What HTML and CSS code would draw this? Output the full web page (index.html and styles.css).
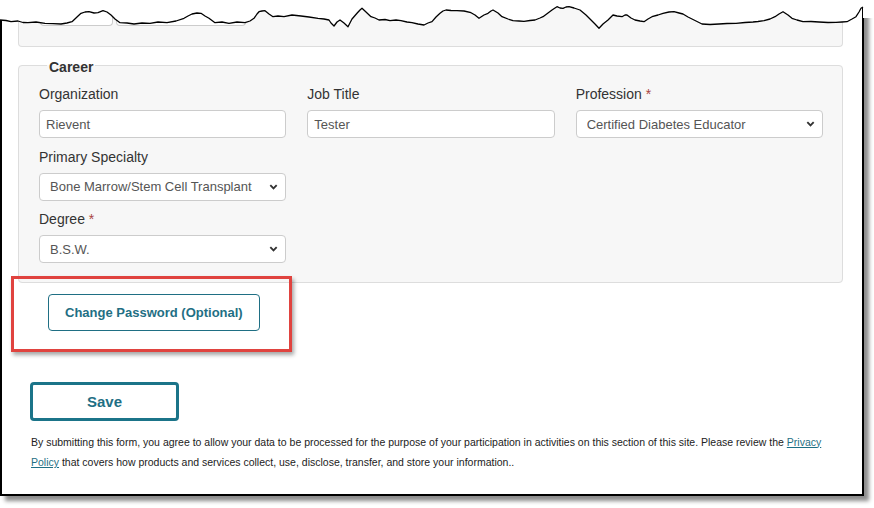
FILE: index.html
```html
<!DOCTYPE html>
<html>
<head>
<meta charset="utf-8">
<link rel="stylesheet" href="styles.css">
</head>
<body>
<div class="frame">
  <div class="prev">
    <div class="prev-input prev-a"></div>
    <div class="prev-input prev-b"></div>
  </div>

  <fieldset class="career">
    <legend>Career</legend>
    <div class="grid">
      <div class="group">
        <label>Organization</label>
        <input class="control" type="text" value="Rievent">
      </div>
      <div class="group">
        <label>Job Title</label>
        <input class="control" type="text" value="Tester">
      </div>
      <div class="group">
        <label>Profession <span class="req">*</span></label>
        <select class="control select"><option>Certified Diabetes Educator</option></select>
      </div>
      <div class="group">
        <label>Primary Specialty</label>
        <select class="control select"><option>Bone Marrow/Stem Cell Transplant</option></select>
      </div>
      <div class="group row-start">
        <label>Degree <span class="req">*</span></label>
        <select class="control select"><option>B.S.W.</option></select>
      </div>
    </div>
  </fieldset>

  <div class="pw-row">
    <button class="btn-outline">Change Password (Optional)</button>
  </div>

  <div class="save-row">
    <button class="btn-save">Save</button>
  </div>

  <p class="disclaimer">By submitting this form, you agree to allow your data to be processed for the purpose of your participation in activities on this section of this site. Please review the <a href="#">Privacy</a> <a href="#">Policy</a> that covers how products and services collect, use, disclose, transfer, and store your information..</p>

  <div class="highlight"></div>

  <svg class="torn" width="874" height="40" viewBox="0 0 874 40">
    <polygon fill="#fff" points="0,0 0,20 6,20.5 11,21.7 18,21 23,22.5 28,22.7 36,22 45,23.3 53,23.6 61,24 67,23 72,21.7 77,17 81,13.3 85,12 89,11.7 94,13 98,12.7 103,10.7 107,12 111,15 115,19 120,22.7 127,23 134,24 142,23 150,23.3 158,22 167,22.7 176,21 184,18.3 188,16 192,14 197,13 201,13.3 205,16 209,18.3 215,22.7 222,22 229,23.3 237,22 245,22.7 250,21 254,18.3 257,14 259,11.7 262,11 265,10.7 269,14 273,16.7 278,16 284,16.7 292,15 301,16 309,17 318,18.3 324,19 329,20 331,23 334,26 337,22 340,20 344,23 348,26.7 352,19 357,13.3 360,10 362,8.3 366,12 371,16.7 375,18 379,20 385,19.5 390,20.7 396,20 401,20.7 407,22 412,22.7 418,24 424,25 428,23 432,21.7 436,17 440,13.3 443,11 446,10 451,10.5 457,10.7 464,11 471,12.7 475,15 479,18.3 484,15 488,13.3 491,11 493,10 498,13 502,16.7 508,19 513,20.7 519,21 524,21.3 530,20.5 535,20 540,18 543,16.7 548,13 552,10 555,8 557,6.7 560,8 563,8.3 566,7 569,6.7 574,8 580,10 586,15 591,20 595,24 599,28.3 603,24 608,20 611,17 613,15 617,16 622,16.7 625,15 627,15 631,18 635,20 640,21 644,21.7 648,19 652,16.7 658,15 663,13.3 669,12 674,11.7 679,13 683,14 688,17 694,20 698,22 702,24 710,24.5 719,24 727,23.5 736,23.3 745,22.5 753,22 758,21.5 764,20.7 770,19 775,16.7 779,14 783,11.7 788,15 792,18.3 797,20 803,21.7 811,21.5 819,22 828,22.5 836,22.3 842,22 847,21.7 852,19 856,16.7 859,12 861,8.3 863,7 863,18 874,18 874,0"/>
    <polyline fill="none" stroke="#000" stroke-width="1.3" stroke-linejoin="round" points="0,20 6,20.5 11,21.7 18,21 23,22.5 28,22.7 36,22 45,23.3 53,23.6 61,24 67,23 72,21.7 77,17 81,13.3 85,12 89,11.7 94,13 98,12.7 103,10.7 107,12 111,15 115,19 120,22.7 127,23 134,24 142,23 150,23.3 158,22 167,22.7 176,21 184,18.3 188,16 192,14 197,13 201,13.3 205,16 209,18.3 215,22.7 222,22 229,23.3 237,22 245,22.7 250,21 254,18.3 257,14 259,11.7 262,11 265,10.7 269,14 273,16.7 278,16 284,16.7 292,15 301,16 309,17 318,18.3 324,19 329,20 331,23 334,26 337,22 340,20 344,23 348,26.7 352,19 357,13.3 360,10 362,8.3 366,12 371,16.7 375,18 379,20 385,19.5 390,20.7 396,20 401,20.7 407,22 412,22.7 418,24 424,25 428,23 432,21.7 436,17 440,13.3 443,11 446,10 451,10.5 457,10.7 464,11 471,12.7 475,15 479,18.3 484,15 488,13.3 491,11 493,10 498,13 502,16.7 508,19 513,20.7 519,21 524,21.3 530,20.5 535,20 540,18 543,16.7 548,13 552,10 555,8 557,6.7 560,8 563,8.3 566,7 569,6.7 574,8 580,10 586,15 591,20 595,24 599,28.3 603,24 608,20 611,17 613,15 617,16 622,16.7 625,15 627,15 631,18 635,20 640,21 644,21.7 648,19 652,16.7 658,15 663,13.3 669,12 674,11.7 679,13 683,14 688,17 694,20 698,22 702,24 710,24.5 719,24 727,23.5 736,23.3 745,22.5 753,22 758,21.5 764,20.7 770,19 775,16.7 779,14 783,11.7 788,15 792,18.3 797,20 803,21.7 811,21.5 819,22 828,22.5 836,22.3 842,22 847,21.7 852,19 856,16.7 859,12 861,8.3 863,7"/>
  </svg>
</div>
</body>
</html>
```

FILE: styles.css
```css
* { box-sizing: border-box; }

html, body {
  margin: 0;
  padding: 0;
  background: #fff;
}

body {
  font-family: "Liberation Sans", Arial, sans-serif;
  color: #333;
  width: 874px;
  height: 508px;
  overflow: hidden;
}

.frame {
  position: relative;
  width: 864px;
  height: 496px;
  border-left: 2px solid #000;
  border-right: 2px solid #000;
  border-bottom: 2px solid #000;
  box-shadow: 5px 5px 4px rgba(0, 0, 0, 0.45);
  background: #fff;
}

.prev {
  position: relative;
  margin: 0 19px 0 16px;
  height: 47px;
  background: #f7f7f7;
  border: 1px solid #ddd;
  border-top: none;
  border-radius: 0 0 4px 4px;
}

.prev-input {
  position: absolute;
  top: 0;
  height: 26px;
  background: #fff;
  border: 1px solid #ccc;
  border-top: none;
  border-radius: 0 0 4px 4px;
}

.prev-a { left: 21px; width: 73px; }
.prev-b { left: 97px; width: 130px; }

.career {
  margin: 9px 19px 0 16px;
  padding: 9px 19px 10px 20px;
  background: #f7f7f7;
  border: 1px solid #ddd;
  border-radius: 4px;
  min-width: 0;
}

.career legend {
  margin-left: 8px;
  padding: 3px 2px 0;
  font-size: 14px;
  line-height: 16px;
  font-weight: bold;
  color: #333;
}

.grid {
  display: grid;
  grid-template-columns: repeat(3, 1fr);
  column-gap: 21px;
}

.row-start { grid-column: 1; }

.group {
  margin-bottom: 8.5px;
  display: flex;
  flex-direction: column;
}

.group label {
  font-size: 14px;
  line-height: 20px;
  margin-bottom: 6px;
  color: #333;
}

.req { color: #a94442; }

.control {
  width: 100%;
  height: 28px;
  margin: 0;
  font-family: "Liberation Sans", Arial, sans-serif;
  font-size: 13px;
  color: #555;
  background: #fff;
  border: 1px solid #ccc;
  border-radius: 4px;
  padding: 0 6px;
  outline: none;
}

.select {
  -webkit-appearance: none;
  appearance: none;
  padding: 0 24px 0 10px;
  background-image: url("data:image/svg+xml;utf8,<svg xmlns='http://www.w3.org/2000/svg' width='10' height='7' viewBox='0 0 10 7'><path d='M1.3 1.4 L5 5.1 L8.7 1.4' fill='none' stroke='%23333' stroke-width='2.2'/></svg>");
  background-repeat: no-repeat;
  background-position: right 7px center;
  background-size: 9px 6px;
}

.pw-row {
  display: flex;
  margin-top: 11px;
  padding-left: 46px;
}

.btn-outline {
  height: 37px;
  padding: 0 16px;
  font-family: "Liberation Sans", Arial, sans-serif;
  font-size: 13px;
  font-weight: bold;
  color: #1f6f84;
  background: #fff;
  border: 1px solid #1f6f84;
  border-radius: 4px;
}

.save-row {
  display: flex;
  margin-top: 51px;
  padding-left: 28px;
}

.btn-save {
  width: 149px;
  height: 39px;
  font-family: "Liberation Sans", Arial, sans-serif;
  font-size: 15px;
  font-weight: bold;
  color: #1f6f84;
  background: #fff;
  border: 3px solid #1b7489;
  border-radius: 4px;
}

.disclaimer {
  margin: 11px 19px 0 29px;
  font-size: 10.5px;
  line-height: 20.5px;
  color: #222;
}

.disclaimer a {
  color: #1f6f84;
  text-decoration: underline;
}

.highlight {
  position: absolute;
  left: 9px;
  top: 276px;
  width: 281px;
  height: 76px;
  border: 3px solid #e0433f;
  box-shadow: 2px 3px 4px rgba(0, 0, 0, 0.35);
}

.torn {
  position: absolute;
  left: -2px;
  top: 0;
}
```
